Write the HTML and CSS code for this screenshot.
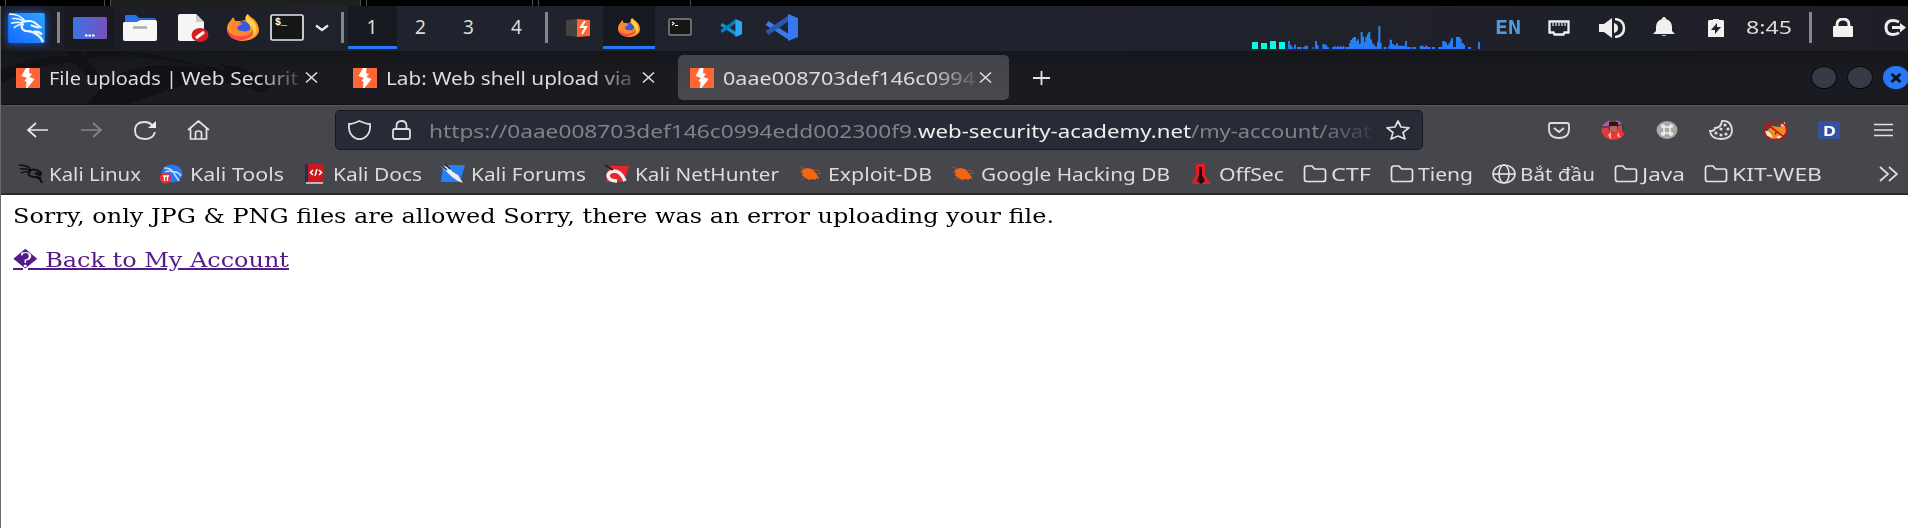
FILE: index.html
```html
<!DOCTYPE html>
<html lang="en">
<head>
<meta charset="utf-8">
<title>Upload result</title>
<link rel="stylesheet" href="styles.css">
</head>
<body>
<svg class="defs" aria-hidden="true">
  <symbol id="burp" viewBox="0 0 24 20" preserveAspectRatio="none"><path fill="#ff6633" d="M0 0h24v20H0z"/><path fill="#fff" d="M10 0h3.500l-.5 5 3 1-2.500 3 5 2-7 9H10l.5-6 -2-1.500L11 10 5.500 8z"/></symbol>
  <symbol id="fox" viewBox="0 0 31 27" preserveAspectRatio="none"><path fill="#ff9b22" d="M20 0c2 2 3 3 6 5 4 4 5 8 5 12-1 6-8 10-16 10S0 22 0 15c0-4 2-7 4-9l2-3 2 4h5l5-1c-1-2 0-4 2-6z"/><path fill="#fb4651" d="M0 14c2 4 5 8 11 8 6 1 11-1 14-6 1 4-2 8-7 9-9 4-18-2-18-11z"/><circle cx="15.500" cy="14" r="7" fill="#315ae0"/><path fill="#ff8530" d="M3 8c4-2 8-1 12 2l-4 2c-2 1-1 5 3 5 4 1 7 0 9-2-2 6-7 8-13 6C4 19 1 14 3 8z"/><path fill="#ffd447" d="M20 0c0 4 6 6 8 11 1 5 0 8-2 11 0-6-2-10-6-13-2-3-2-6 0-9z"/></symbol>
  <symbol id="folder" viewBox="0 0 23 18"><path d="M1 3.500Q1 1 3.500 1h5l2.500 3h9Q22 4 22 6.500v8q0 2-2.500 2h-16Q1 16.500 1 14.500z" fill="none" stroke="#e4e4e2" stroke-width="1.700"/></symbol>
  <symbol id="close" viewBox="0 0 13 11"><path d="M1 .5l11 10M12 .5L1 10.500" stroke="#e0e0df" stroke-width="1.500"/></symbol>
  <symbol id="bug" viewBox="0 0 24 16"><path d="M1 1l8 3M2 7l6-1M3 14l6-3M15 4l7 1M17 8l6-1M18 10l3 3" stroke="#9d5134" stroke-width="1"/><path fill="#f26511" d="M3 5l3-2 3-1 5 1 3 3 4 6-1 1-2-1v2l-3-1-4 1-5-3-2-2 1-2z"/></symbol>
</svg>

<div class="strip"><i class="s1"></i><i class="s2"></i><i class="s3"></i><i class="s4"></i><i class="s5"></i><i class="s6"></i><i class="s3"></i><i class="s7"></i></div>
<div class="desktop">
<header class="panel">
  <div class="cell"><svg class="kali" width="37" height="30" viewBox="0 0 39 32"><defs><linearGradient id="kg" x1="0" y1="1" x2="1" y2="0"><stop stop-color="#1668ff"/><stop offset="1" stop-color="#2aa5ff"/></linearGradient></defs><rect width="39" height="32" rx="2" fill="url(#kg)"/><g fill="none" stroke="#edf6ff"><path d="M1 1Q13 1 18 9M4 6q8-1 14 4M3 11q7-2 13 0M6 16q4-4 10-4" stroke-width="1.600"/><path d="M14 10q9-3 14 0l6 5-3 .5-7-2.500" stroke-width="2.200"/><path d="M16 11q-4 6 2 8 7 0 11 3 6 3 8 9M27 20q6-1 9 3" stroke-width="2.500"/></g></svg></div>
  <div class="cell"><i class="sep"></i></div>
  <div class="cell dark"><svg width="34" height="22"><defs><linearGradient id="dg"><stop stop-color="#3d73e6"/><stop offset="1" stop-color="#7651b8"/></linearGradient></defs><rect width="34" height="22" rx="1.500" fill="url(#dg)"/><path d="M12 18.500h10" stroke="#fff" stroke-width="2" stroke-dasharray="2.500 1"/></svg></div>
  <div class="cell"><svg width="34" height="26"><path fill="#2e6fe4" d="M2 1q0-1 2-1h9l3 3h15q2 0 2 2v9H2z"/><path fill="#2058b8" d="M15 4h17v4H15z"/><path fill="#f7f7f7" d="M0 8q0-1 2-1h12l3-2h15q2 0 2 2v17q0 2-2 2H2q-2 0-2-2z"/><path d="M11 12.500h12" stroke="#aaa" stroke-width="2.500" stroke-linecap="round"/></svg></div>
  <div class="cell"><svg width="31" height="28"><path fill="#f5f5f4" d="M2 0h16l8 8v19H2q-2 0-2-2V2q0-2 2-2z"/><path fill="#c9c9c8" d="M18 0l8 8h-8z"/><ellipse cx="22" cy="21" rx="8.500" ry="7" fill="#d31e22"/><path d="M18 24l8-6" stroke="#fff" stroke-width="3"/></svg></div>
  <div class="cell"><svg width="32" height="27"><use href="#fox"/></svg></div>
  <div class="cell"><svg width="34" height="27"><rect x="1" y="1" width="32" height="25" rx="1.500" fill="#151716" stroke="#e5e5e5" stroke-width="1.700"/></svg><span class="prompt">$_</span></div>
  <div class="cell"><svg width="14" height="8"><path d="M1 1.500l6 4.500 6-4.500" fill="none" stroke="#e8e8e8" stroke-width="2.300"/></svg></div>
  <div class="cell nudge"><i class="sep"></i></div>
  <div class="cell ws on">1</div><div class="cell ws">2</div><div class="cell ws">3</div><div class="cell ws">4</div>
  <div class="cell"><i class="sep"></i></div>
  <div class="cell"><svg width="24" height="18" viewBox="0 0 24 18"><path fill="#444342" d="M0 1l11-1v18L0 16.500z"/><path fill="#ff6633" d="M11 0l13 1v16l-13 1z"/><path d="M19 2l-4 6h5l-4 7" fill="none" stroke="#fff" stroke-width="2"/></svg></div>
  <div class="cell on"><svg width="22" height="19"><use href="#fox"/></svg></div>
  <div class="cell"><svg width="24" height="19"><rect x="1" y="1" width="22" height="16" rx="1.500" fill="#151716" stroke="#858585" stroke-width="1.500"/><path d="M4 4l2 1.500L4 7M7 7.500h3" fill="none" stroke="#fff" stroke-width="1.200"/></svg></div>
  <div class="cell"><svg width="22" height="18" viewBox="0 0 33 27" preserveAspectRatio="none"><path d="M2 8l23 15" stroke="#1294dc" stroke-width="5"/><path d="M2 19L24 3" stroke="#087fbd" stroke-width="5"/><path fill="#29a9f2" d="M23 0l10 4v19l-10 4z"/></svg></div>
  <div class="cell"><svg width="33" height="27"><path d="M2 9l22 14" stroke="#3c79e8" stroke-width="5"/><path d="M2 19L24 4" stroke="#2858ae" stroke-width="5"/><path fill="#3978ef" d="M23 0l10 4v19l-10 4z"/></svg></div>
  <div></div>
  <div class="graph"><svg width="230" height="43" viewBox="66 18 690 129"><defs><linearGradient id="gg" gradientUnits="userSpaceOnUse" x1="0" y1="75" x2="0" y2="147"><stop stop-color="#159cba"/><stop offset=".4" stop-color="#208aee"/><stop offset="1" stop-color="#2578ff"/></linearGradient></defs><path fill="#00ffe0" d="M66 126h18v21H66zM93 129h18v18H93zM120 123h18v24h-18zM147 126h18v21h-18z"/><path fill="url(#gg)" d="M174 147v-24h6v12h5v6h4v6zM192 134h6v13h-6zM201 141h15v6h-15zM219 147v-6h5v-4h10v10zM247 141h4v6h-4zM255 147v-24h6v13h5v11zM277 147v-15h9v4h6v6h5v5zM306 147v-6h6v-4h4v4h6v-4h4v4h5v-4h4v4h4v-4h4v10zM345 147v-6h12v-12h4v-9h5v-5h4v-4h8v12h4v-5h5v13h5V96h6v14h4v16h4v-16h5v-8h4v-6h6v22h5v12h5v6h5v4h5v-15h4V78h6v51h4v18zM461 141h9v6h-9zM475 147v-10h4v-18h7v13h6v4h6v-6h6v7h21v-14h6v18h12v6zM546 141h12v6h-12zM569 147v-10h12v4h4v-4h8v4h9v6zM606 141h9v6h-9zM624 147v-6h13v-18h8v4h6v8h5v-6h4v-6h3v-8h6v26h9v-30h12v5h5v13h6v6h4v12zM714 141h9v6h-9zM744 126h6v21h-6z"/></svg></div>
  <div class="cell en"><span class="fit" data-w="26"><b>EN</b></span></div>
  <div class="cell"><svg width="22" height="16"><path d="M1.500 1.500h19v11h-4l-1 2h-9l-1-2h-4z" fill="none" stroke="#eee" stroke-width="2.300"/><path d="M5 3v3M8 3v3M11 3v3M14 3v3M17 3v3" stroke="#ddd" stroke-width="1.300"/></svg></div>
  <div class="cell"><svg width="27" height="20"><path fill="#eee" d="M0 6h5l8-6v20l-8-6H0zM15 5q4 1 4 5t-4 5z"/><path d="M16 1q9 1 9 9t-9 9" fill="none" stroke="#eee" stroke-width="2.500"/></svg></div>
  <div class="cell bell"><svg width="22" height="19"><path fill="#f1f1f0" d="M9 2q0-2 2-2t2 2q6 2 6 8v4l3 3H0l3-3v-4q0-6 6-8zM8 18h6l-3 1z"/></svg></div>
  <div class="cell"><svg width="16" height="18"><path fill="#f0f0ef" d="M1 1h4V0h6v1h4l1 1v16H0V2z"/><path fill="#1f212a" d="M9 4l-6 7h4v4l6-7H9z"/></svg></div>
  <div class="cell clock"><span class="fit" data-w="46">8:45</span></div>
  <div class="cell"><i class="sep"></i></div>
  <div class="cell"><svg width="20" height="19"><rect y="8" width="20" height="11" rx="1" fill="#f1f1f0"/><path d="M4 9V7q0-6 6-6t6 6v2" fill="none" stroke="#f1f1f0" stroke-width="2.800"/></svg></div>
  <div class="cell logout"><svg width="23" height="17"><path d="M15 3Q12 1.500 9 1.500q-7 0-7 7t7 7q4 0 6-2" fill="none" stroke="#eee" stroke-width="3"/><path fill="#eee" d="M8 7h8V4l6 4.500-6 5V10H8z"/></svg></div>
</header>

<div class="tabbar">
  <svg class="art" width="270" height="54" preserveAspectRatio="none"><path d="M0 18Q40 4 70 5L76 11Q30 13 0 33zM66 0h13l25 31q38-24 89-14l-44-8 55 9-10-6 31 7-5-6q30 4 48 17 3 9-8 12-45-20-84-6-48 17-54 18H85l14-16Q76 17 66 0zM84 1q70-4 118 16-58-16-118-10z" fill="#111215"/></svg>
  <div class="tab"><svg width="24" height="20"><use href="#burp"/></svg><div class="title"><span class="fit" data-w="128">File uploads |</span><span class="fit" data-w="117">Web Securit</span></div><svg class="x" width="13" height="11"><use href="#close"/></svg></div>
  <div class="tab"><svg width="24" height="20"><use href="#burp"/></svg><div class="title"><span class="fit" data-w="246">Lab: Web shell upload via</span></div><svg class="x" width="13" height="11"><use href="#close"/></svg></div>
  <div class="tab active"><svg width="24" height="20"><use href="#burp"/></svg><div class="title"><span class="fit" data-w="252">0aae008703def146c0994</span></div><svg class="x" width="13" height="11"><use href="#close"/></svg></div>
  <svg class="plus" width="17" height="14"><path d="M8.500 0v14M0 7h17" stroke="#e4e4e4" stroke-width="1.800"/></svg>
  <div class="controls"><i></i><i></i><i class="quit"><svg width="12" height="10"><path d="M1.500 1l9 8M10.500 1l-9 8" stroke="#10131a" stroke-width="3"/></svg></i></div>
</div>

<div class="nav">
  <svg class="back" width="21" height="16"><path d="M9 1L1 8l8 7M1 8h20" fill="none" stroke="#e8e8e8" stroke-width="1.700"/></svg>
  <svg class="fwd" width="21" height="16"><path d="M12 1l8 7-8 7M20 8H0" fill="none" stroke="#85868a" stroke-width="1.700"/></svg>
  <svg class="reload" width="23" height="19"><path d="M18 4Q15 1 11 1 1 1 1 9.500T11 18q8 0 10-7" fill="none" stroke="#e4e4e4" stroke-width="1.800"/><path fill="#eee" d="M22 0v7h-8z"/></svg>
  <svg class="home" width="23" height="20"><path d="M1 10L11.500 1 22 10M3.500 8v11h5v-6q0-2 3-2t3 2v6h5V8M9 19h5" fill="none" stroke="#e4e4e4" stroke-width="1.700"/></svg>
  <div class="url">
    <svg width="23" height="20"><path d="M11.500 1Q18 4 22 4q1 10-6 14-4.500 2.500-9 0Q0 14 1 4q4 0 10.500-3z" fill="none" stroke="#dddddc" stroke-width="1.800"/></svg>
    <svg class="lock" width="19" height="20"><rect x="1" y="9" width="17" height="10" rx="2" fill="none" stroke="#ddd" stroke-width="1.800"/><path d="M4.500 9V6q0-5 5-5t5 5v3" fill="none" stroke="#ddd" stroke-width="1.800"/></svg>
    <div class="address"><span class="fit" data-w="489">https://0aae008703def146c0994edd002300f9.</span><span class="fit host" data-w="273">web-security-academy.net</span><span class="fit" data-w="180">/my-account/avat</span></div>
    <svg class="star" width="24" height="20"><path d="M12 1l3 6 8 .8-6 4.700 2 6.500-7-3-7 3 2-6.500-6-4.700L9 7z" fill="none" stroke="#dddddc" stroke-width="1.700" stroke-linejoin="round"/></svg>
  </div>
  <div class="addons">
    <div><svg width="22" height="17"><path d="M3 1h16q2 0 2 2v4q0 9-10 9T1 7V3q0-2 2-2z" fill="none" stroke="#ddd" stroke-width="1.800"/><path d="M6 6l5 4 5-4" fill="none" stroke="#ddd" stroke-width="1.900"/></svg></div>
    <div><svg width="25" height="20"><defs><clipPath id="av"><ellipse cx="12.500" cy="10" rx="12" ry="10"/></clipPath></defs><g clip-path="url(#av)"><path fill="#71404d" d="M0 0h25v20H0z"/><path fill="#be55a6" d="M0 0h9v6H0zM15 0h5v4h-5z"/><path fill="#1d4d46" d="M21 4h4v6h-4z"/><path fill="#d0454b" d="M0 8h7v6H0zM17 6h4v5h-4z"/><path fill="#1c1b23" d="M8 2h9v5H8z"/><path fill="#b06b58" d="M9 6h7v6H9z"/><path fill="#ee3434" d="M1 12l8-2 4 3 4-4 7 5v6H4z"/><path fill="#f4b6af" d="M7 15l3-3v8zM17 12l3 6-4-2z"/></g></svg></div>
    <div><svg width="22" height="18"><ellipse cx="11" cy="9" rx="10.500" ry="9" fill="#aaa9a8"/><path d="M8 6h6v6H8zM8 6H6q-1-2 1-2t1 2zM14 6h2q1-2-1-2t-1 2zM8 12H6q-1 2 1 2t1-2zM14 12h2q1 2-1 2t-1-2z" fill="none" stroke="#f1f1f1" stroke-width="1.500"/></svg></div>
    <div><svg width="24" height="20"><path d="M13 1Q22 0 23 10q0 9-11 9Q2 19 1 11q5 0 5-3 6 0 7-7z" fill="none" stroke="#ddd" stroke-width="1.800"/><g fill="#ddd"><circle cx="16" cy="5" r="1.600"/><circle cx="12" cy="9" r="1.600"/><circle cx="19" cy="9" r="1.600"/><circle cx="7" cy="13" r="1.600"/><circle cx="12" cy="15" r="1.600"/><circle cx="17" cy="14" r="1.600"/></g></svg></div>
    <div><svg width="25" height="21"><path fill="#ef8b22" d="M3 12l6-6 8 1 5-5 1 10-5 6-10 1z"/><path fill="#f5e6c2" d="M2 11q5-1 8 7l-6-2zM17 5l5-3v5zM13 17l8-3-5 5z"/><path fill="#4c291c" d="M12 12l2 1-2 2z"/><ellipse cx="12.500" cy="10.500" rx="11.500" ry="9.500" fill="none" stroke="#c41515" stroke-width="1.600"/><path d="M4 4l17 13" stroke="#c41515" stroke-width="1.600"/></svg></div>
    <div><span class="dbox"><b class="fit" data-w="13">D</b></span></div>
    <div><svg width="19" height="14"><path d="M0 1.500h19M0 7h19M0 12.500h19" stroke="#e4e4e4" stroke-width="1.500"/></svg></div>
  </div>
</div>

<div class="marks">
  <div class="mark"><svg width="24" height="20"><path d="M0 1q9 0 12 5M1 5q6-1 11 2M2 9q5-2 9-1" fill="none" stroke="#0e0f11" stroke-width="1.400"/><path d="M10 7q5-3 9 0l3 2-1 2-5-2M11 7q-4 5 4 6 6 0 8 6M17 13l5 1" fill="none" stroke="#0e0f11" stroke-width="2.200"/></svg><span class="fit" data-w="92">Kali Linux</span></div>
  <div class="mark"><svg width="24" height="20"><ellipse cx="12" cy="9.500" rx="10.500" ry="9" fill="#2878f4"/><path d="M4 4q7 0 9 4 5-1 8 4M5 8q8-3 10 3l4 6" fill="none" stroke="#b8d8ff" stroke-width="1.700"/><circle cx="5.500" cy="14" r="5.500" fill="#f02d36"/><path d="M3 12h6M4.500 12v5M7.500 12v5" stroke="#fff" stroke-width="1.300"/></svg><span class="fit" data-w="94">Kali Tools</span></div>
  <div class="mark"><svg width="24" height="20"><path fill="#242f55" d="M2 0h4v18H2z"/><path fill="#c9171e" d="M5 0h16v18H5z"/><path fill="#bbb5b8" d="M3 18h17v2H3z"/><path d="M10 6L7.500 8.500 10 11M16 6l2.500 2.500L16 11M14 5l-2 7" fill="none" stroke="#fff" stroke-width="1.500"/></svg><span class="fit" data-w="89">Kali Docs</span></div>
  <div class="mark"><svg width="24" height="20"><path fill="#277ff7" d="M2 1h22l-5 17H0z"/><path fill="#eee" d="M0 2l7 1 5 5 5 3 5 8-5-2-6-4-5-5z"/><path d="M1 2l5 4M4 0l5 5" stroke="#222" stroke-width="1.400"/></svg><span class="fit" data-w="115">Kali Forums</span></div>
  <div class="mark"><svg width="24" height="20"><path fill="#e8252d" d="M4 2h20l-5 16H1z"/><path d="M20 17Q16 7 9 7q-6 1-6 5 1 5 9 5" fill="none" stroke="#f4eeee" stroke-width="3.500"/><path d="M0 1l8 5" stroke="#252226" stroke-width="2"/></svg><span class="fit" data-w="144">Kali NetHunter</span></div>
  <div class="mark"><svg width="24" height="16"><use href="#bug"/></svg><span class="fit" data-w="104">Exploit-DB</span></div>
  <div class="mark"><svg width="24" height="16"><use href="#bug"/></svg><span class="fit" data-w="189">Google Hacking DB</span></div>
  <div class="mark"><svg width="24" height="20"><path fill="#df2028" d="M7 0h9v11l6 9H2l5-9z"/><path fill="#280b0e" d="M10 3h3v8l3 6-4 3-4-3 2-6z"/></svg><span class="fit" data-w="65">OffSec</span></div>
  <div class="mark group"><svg width="24" height="18"><use href="#folder"/></svg><span class="fit" data-w="40">CTF</span></div>
  <div class="mark group"><svg width="24" height="18"><use href="#folder"/></svg><span class="fit" data-w="55">Tieng</span></div>
  <div class="mark group"><svg width="24" height="20"><g fill="none" stroke="#e1e1e0" stroke-width="1.600"><ellipse cx="12" cy="10" rx="11" ry="9"/><ellipse cx="12" cy="10" rx="5" ry="9"/><path d="M1 10h22"/></g></svg><span class="fit" data-w="75">Bắt đầu</span></div>
  <div class="mark group"><svg width="24" height="18"><use href="#folder"/></svg><span class="fit" data-w="43">Java</span></div>
  <div class="mark group"><svg width="24" height="18"><use href="#folder"/></svg><span class="fit" data-w="90">KIT-WEB</span></div>
  <svg class="more" width="20" height="16"><path d="M1 1l8 7-8 7M10 1l8 7-8 7" fill="none" stroke="#ddd" stroke-width="1.700"/></svg>
</div>

<main class="page">
  <p><span class="fit" data-w="1041">Sorry, only JPG &amp; PNG files are allowed Sorry, there was an error uploading your file.</span></p>
  <p><a href="#"><span class="fit" data-w="276">� Back to My Account</span></a></p>
</main>
</div>
<script src="fit.js"></script>
</body>
</html>
```
FILE: styles.css
```css
* { box-sizing: border-box; }
body { margin: 0; height: 528px; overflow: hidden; background: #fff; font: 18.5px "Noto Sans", sans-serif; color: #dcdcda; }
svg { display: block; flex: none; }
.defs { position: absolute; width: 0; height: 0; }
.fit { display: block; white-space: nowrap; flex: none; }
.fit > .ink { display: inline-block; transform-origin: 0 50%; }

.strip { display: flex; height: 6px; background: #000; }
.strip i { border-right: 1px solid #4a4a4a; }
.s1 { width: 6px; } .s2 { width: 99px; } .s3 { width: 6px; }
.s4 { width: 250px; background: #1f1f1f; }
.s5 { width: 6px; } .s6 { width: 166px; } .s7 { width: 152px; }

.desktop { height: 522px; border-left: 1px solid #6a6a6a; }
.panel { display: grid; height: 45px; padding-bottom: 2px; background: linear-gradient(90deg, #1b1c23, #20222d 20%, #20222e 55%, #1e1f26);
  grid-template-columns: 51px 12px 51px 50px 56px 43px 46px 23px 15px 49px 48px 48px 48px 11px 51px 52px 50px 52px 49px 1fr 230px 53px 47px 61px 42px 61px 46px 37px 28px 51px; }
.cell { position: relative; display: flex; align-items: center; justify-content: center; }
.kali { filter: drop-shadow(0 0 4px #1866e8); }
.sep { width: 3px; height: 31px; background: #85868a; }
.nudge { padding-left: 4px; }
.dark { background: #191a20; }
.prompt { position: absolute; left: 11px; top: 11px; font: bold 10px/12px "Liberation Mono", monospace; color: #fff; }
.ws { font-size: 19px; padding: 0 1px 2px 0; }
.on { background: #171920; box-shadow: inset 0 -3px #2777f7; }
.graph { display: flex; align-items: flex-end; }
.en { font-family: "DejaVu Sans Mono", monospace; font-size: 20px; color: #4e9dda; padding-right: 2px; }
.en, .clock { padding-bottom: 2px; }
.bell { padding-bottom: 2px; }
.logout { justify-content: flex-end; padding-right: 1px; }

.tabbar { position: relative; display: flex; align-items: center; height: 54px; padding-left: 3px; gap: 6px; background: linear-gradient(#15161a, #1a1b20 40%); border-bottom: 1px solid #101114; }
.art { position: absolute; left: 0; top: 0; }
.tab { position: relative; display: flex; align-items: center; width: 331px; height: 45px; padding-left: 12px; border-radius: 5px; }
.active { background: linear-gradient(#414349, #484a50); }
.title { display: flex; gap: 4px; width: 252px; margin-left: 9px; overflow: hidden; -webkit-mask-image: linear-gradient(90deg, #000 82%, rgba(0,0,0,.2) 99%); mask-image: linear-gradient(90deg, #000 82%, rgba(0,0,0,.2) 99%); }
.x { margin-left: 4px; }
.plus { margin-left: 18px; }
.controls { display: flex; gap: 10px; margin-left: auto; margin-right: -1px; }
.controls i { display: flex; align-items: center; justify-content: center; width: 26px; height: 23px; border-radius: 50%; background: #373a46; border: 1px solid #08090c; }
.controls .quit { background: #2777f7; border-color: #2777f7; }

.nav { display: flex; align-items: center; height: 50px; padding: 0 0 1px 26px; overflow: hidden; background: #45474d; border-top: 1px solid #55575c; }
.fwd { margin-left: 33px; }
.reload { margin-left: 32px; }
.home { margin-left: 30px; }
.url { display: flex; flex: none; align-items: center; width: 1088px; height: 40px; margin-left: 125px; padding-left: 12px; background: #282a36; border: 1px solid #17181d; border-radius: 5px; }
.lock { margin-left: 21px; }
.address { display: flex; width: 946px; margin-left: 18px; overflow: hidden; color: #818289; -webkit-mask-image: linear-gradient(90deg, #000 94%, rgba(0,0,0,.1) 100%); mask-image: linear-gradient(90deg, #000 94%, rgba(0,0,0,.1) 100%); }
.host { color: #eeeeec; }
.star { margin-left: 11px; }
.addons { display: grid; flex: none; grid-template-columns: repeat(7, 54px); margin-left: 109px; align-items: center; justify-items: center; }
.dbox { display: flex; justify-content: center; align-items: center; width: 22px; height: 18px; border-radius: 2px; background: #3353a0; color: #fff; font-size: 15px; line-height: 18px; }

.marks { display: flex; align-items: center; height: 40px; padding: 0 9px 1px 18px; gap: 19px; background: #45474d; border-bottom: 2px solid #292a2e; }
.mark { display: flex; align-items: center; gap: 6px; }
.group { gap: 4px; }
.more { margin-left: auto; }

.page { height: 333px; padding: 7px 12px; background: #fff; color: #000; font: 20px/28px "DejaVu Serif", serif; }
.page p { margin: 0 0 16px; }
.page a { display: block; width: 276px; color: #551a8b; }
.page a .ink { text-decoration: underline; }
```
FILE: fit.js
```javascript
// Stretch each label horizontally so it fills its slot width.
document.querySelectorAll('.fit').forEach(function (label) {
  var ink = document.createElement('span');
  ink.className = 'ink';
  while (label.firstChild) ink.appendChild(label.firstChild);
  label.appendChild(ink);
  var width = Number(label.dataset.w);
  label.style.width = width + 'px';
  ink.style.transform = 'scaleX(' + width / ink.getBoundingClientRect().width + ')';
});
```
